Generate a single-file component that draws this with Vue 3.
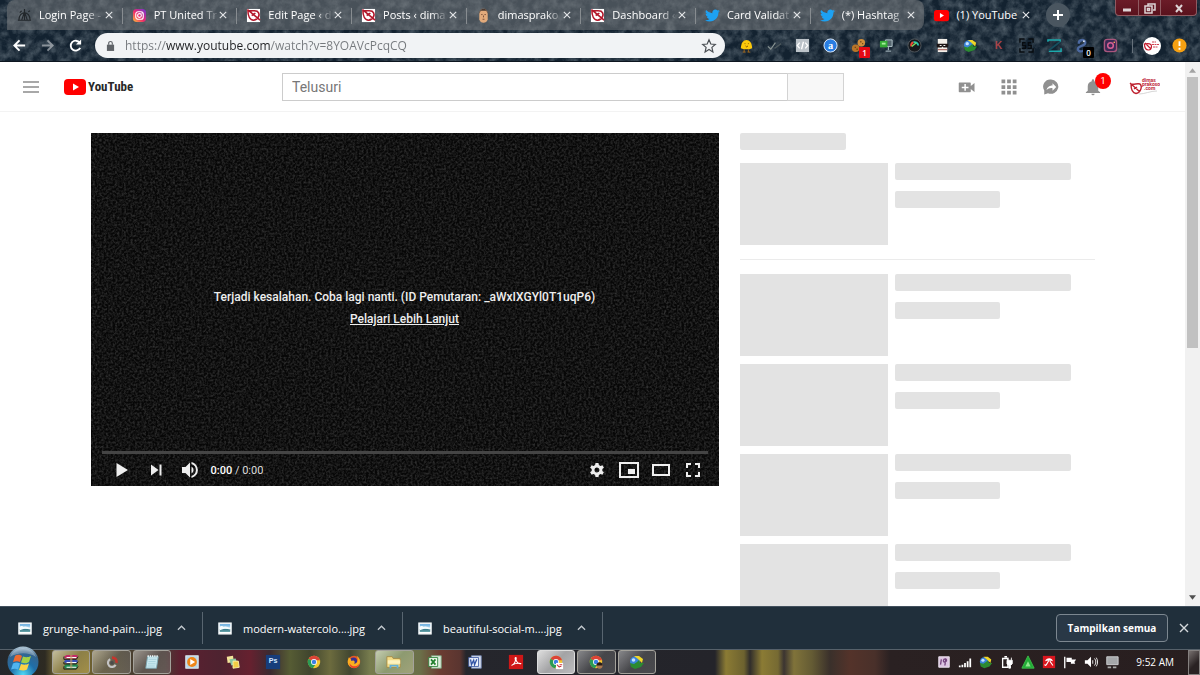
<template>
  <div class="desktop">
    <svg class="sprite" width="0" height="0" aria-hidden="true">
      <defs>
        <linearGradient id="insta" x1="0" y1="1" x2="1" y2="0">
          <stop offset="0" stop-color="#fdc13a" />
          <stop offset="0.45" stop-color="#ee2a6b" />
          <stop offset="1" stop-color="#6a35d8" />
        </linearGradient>
        <radialGradient id="orb" cx="0.5" cy="0.9" r="0.9">
          <stop offset="0" stop-color="#4fd8f5" />
          <stop offset="0.45" stop-color="#1f6ea8" />
          <stop offset="0.8" stop-color="#36648c" />
          <stop offset="1" stop-color="#b9cfdd" />
        </radialGradient>
        <linearGradient id="sky" x1="0" y1="0" x2="0" y2="1">
          <stop offset="0" stop-color="#5aa5dd" />
          <stop offset="0.55" stop-color="#d3ecf5" />
          <stop offset="0.6" stop-color="#2c7285" />
          <stop offset="1" stop-color="#6fa9ad" />
        </linearGradient>
        <filter id="grain" x="0" y="0" width="100%" height="100%">
          <feTurbulence type="fractalNoise" baseFrequency="0.45" numOctaves="2" seed="4" />
          <feColorMatrix values="0 0 0 0 1  0 0 0 0 1  0 0 0 0 1  1.6 0 0 0 -0.55" />
        </filter>
        <filter id="dust" x="0" y="0" width="100%" height="100%">
          <feTurbulence type="fractalNoise" baseFrequency="0.12" numOctaves="4" seed="9" />
          <feColorMatrix values="0 0 0 0 0.6  0 0 0 0 0.68  0 0 0 0 0.72  1.4 0 0 0 -0.45" />
        </filter>
      </defs>

      <!-- tab favicons -->
      <symbol id="login" viewBox="0 0 16 16">
        <path d="M1 13h14M2 13C2 8 5 5 8 5s6 3 6 8M5 13l3-9 3 9M8 4V1M3 5l2-2M12 4l2-1M8 6v7" fill="none" stroke="#22272b" stroke-width="1.2" />
      </symbol>
      <symbol id="instagram" viewBox="0 0 16 16">
        <rect x="1" y="1" width="14" height="14" rx="4" fill="url(#insta)" />
        <rect x="4" y="4" width="8" height="8" rx="2.5" fill="none" stroke="#fff" stroke-width="1.2" />
        <circle cx="8" cy="8" r="2" fill="none" stroke="#fff" stroke-width="1.2" />
        <circle cx="10.7" cy="5.4" r="0.7" fill="#fff" />
      </symbol>
      <symbol id="dimas" viewBox="0 0 16 16">
        <path d="M1 1h14v14H1z" fill="#fff" />
        <path d="M2 2.500c3 1.500 7-.5 10 1 4 3 1 9-4 9.500C4 13 2 8 2 2.500zM2 2l13 11M6 8l4-2.500" fill="none" stroke="#b3182b" stroke-width="1.700" />
      </symbol>
      <symbol id="face" viewBox="0 0 16 16">
        <path d="M3.500 6c0-7 9-7 9 0v6c-1 5-8 5-9 0z" fill="#e2aa7b" />
        <path d="M3.500 6c0-7 9-7 9 0l-1.500-3H5z" fill="#4a3a32" />
        <path d="M5.500 7h1.500M9 7h1.500M7 12h2M8 8v2" fill="none" stroke="#6b4430" stroke-width="0.900" />
      </symbol>
      <symbol id="twitter" viewBox="0 0 24 24">
        <path fill="#1da1f2" d="M23.9 4.6c-.9.4-1.8.7-2.8.8 1-.6 1.800-1.600 2.200-2.700-1 .6-2 1-3.100 1.200-.9-1-2.200-1.600-3.600-1.600-3.200 0-5.500 3-4.800 6A14 14 0 0 1 1.700 3.200a5 5 0 0 0 1.500 6.500c-.8 0-1.600-.2-2.200-.6-.1 2.300 1.600 4.400 3.900 4.900-.7.2-1.500.2-2.200.1.600 2 2.400 3.400 4.600 3.400A10 10 0 0 1 0 19.500a14 14 0 0 0 7.500 2.200c9.100 0 14.300-7.700 14-14.600 1-.7 1.800-1.600 2.400-2.500z" />
      </symbol>
      <symbol id="youtube" viewBox="0 0 24 18">
        <rect y="0" width="24" height="18" rx="4" fill="#f00" />
        <path d="M9.500 5v8l6.500-4z" fill="#fff" />
      </symbol>

      <!-- extensions -->
      <symbol id="chick" viewBox="0 0 16 16">
        <path d="M2 11c0-12 12-12 12 0l-3 1H5z" fill="#fdc90b" />
        <path d="M5.500 12v3M10 12v3M4 15h3M9 15h3" stroke="#a66a1c" stroke-width="1" />
        <path d="M6 6h.8M9.500 6h.8M7 8.500l1.200 1 1.300-1" stroke="#734800" fill="none" />
      </symbol>
      <symbol id="checks" viewBox="0 0 16 16">
        <path d="M1 9l3 3 5-7" fill="none" stroke="#8b9694" stroke-width="1.200" />
        <path d="M8 11l7-5" fill="none" stroke="#4b575c" stroke-width="1.500" />
      </symbol>
      <symbol id="code" viewBox="0 0 16 16">
        <path d="M1 1h14v14H1z" fill="#bcc3c9" />
        <path d="M5 5L2.500 8 5 11M11 5l2.500 3-2.500 3M9 4l-2 8" fill="none" stroke="#fff" stroke-width="1.400" />
      </symbol>
      <symbol id="circle-a" viewBox="0 0 16 16">
        <circle cx="8" cy="8" r="7" fill="#2a7de1" stroke="#e6f1ff" />
        <text x="8" y="11.500" text-anchor="middle" font-family="Liberation Serif" font-size="11" font-weight="700" fill="#fff">a</text>
      </symbol>
      <symbol id="cookies" viewBox="0 0 16 16">
        <circle cx="11" cy="5" r="4" fill="#cf8e3b" />
        <circle cx="5" cy="11" r="4" fill="#b97527" />
        <path d="M10 4h1M12 6h1M4 10h1M6 12h1" stroke="#573412" stroke-width="1.500" />
      </symbol>
      <symbol id="plug" viewBox="0 0 16 16">
        <path d="M7 2h7v7H7zM10 9v4M7 14h6" fill="#55666f" stroke="#b6c8ce" />
        <path d="M1 3h8v7H1z" fill="#36ad36" /><path d="M3 5h4v2H3z" fill="#a6ef9c" />
      </symbol>
      <symbol id="dial" viewBox="0 0 16 16">
        <circle cx="8" cy="8" r="7" fill="#17191d" stroke="#51585d" />
        <path d="M4.500 9A4 4 0 0 1 7 4.500" stroke="#ed4a37" stroke-width="2" fill="none" />
        <path d="M7 4.500A4 4 0 0 1 12 8" stroke="#27c5b5" stroke-width="2" fill="none" />
        <path d="M5 9l5-4" stroke="#7fdc5e" stroke-width="1.500" />
      </symbol>
      <symbol id="mask" viewBox="0 0 16 16">
        <path d="M3 1h10v14H3z" fill="#f2eee8" /><path d="M2 6h12v4H9L8 9l-1 1H2z" fill="#1d1515" />
        <path d="M5 8h2M9 8h2" stroke="#fff" /><path d="M3 12h10v1H3z" fill="#9d4a42" />
      </symbol>
      <symbol id="idm" viewBox="0 0 16 16">
        <circle cx="6" cy="7.500" r="5" fill="#3b84d8" />
        <path d="M5 2l5 0 4 3-1 4-4-4z" fill="#f1d627" />
        <path d="M1 9l4 1 3-2 2-2 1 3 4 0-3 4-6 2-4-2z" fill="#2b8a31" />
        <circle cx="4.500" cy="6" r="1.800" fill="#c4e4ff" />
      </symbol>
      <symbol id="letter-k" viewBox="0 0 16 16">
        <text x="8" y="12" text-anchor="middle" font-family="Liberation Sans" font-size="11" font-weight="700" fill="#a9454b">K</text>
      </symbol>
      <symbol id="frame-s" viewBox="0 0 16 16">
        <path d="M1 5V1h5M10 1h5v4M15 11v4h-5M6 15H1v-4M7 5H4v3h3v3H3M13 5h-3v3h3v3H9" fill="none" stroke="#070b0f" stroke-width="1.500" />
      </symbol>
      <symbol id="letter-z" viewBox="0 0 16 16">
        <path d="M1 4V2h13v2M2 14h13v-3" fill="none" stroke="#1ca9ac" stroke-width="1.600" />
        <path d="M14 4L2 13" stroke="#174e5e" stroke-width="2" />
      </symbol>
      <symbol id="snake" viewBox="0 0 16 16">
        <path d="M4 6c0-5 7-5 7-1s-8 3-8 7c1 4 7 2 8 0" fill="none" stroke="#4c69a0" stroke-width="2.500" />
        <circle cx="9.500" cy="3.500" r="1" fill="#d5e0ee" />
      </symbol>
      <symbol id="insta-line" viewBox="0 0 16 16">
        <rect x="1.500" y="1.500" width="13" height="13" rx="3" fill="#3c2a55" stroke="#a8567c" stroke-width="1.500" />
        <circle cx="8" cy="8" r="3" fill="none" stroke="#d95f94" stroke-width="1.600" />
        <circle cx="12" cy="4.500" r="0.900" fill="#f7a35a" />
      </symbol>
      <symbol id="profile" viewBox="0 0 18 18">
        <circle cx="9" cy="9" r="9" fill="#fff" />
        <path d="M1.500 7c0 4 2 6 4 6s3-2 3-4-3-3-7-2zM2 6l6 6" fill="none" stroke="#c3192c" stroke-width="1.200" />
        <path d="M9 5h4M9 7.500h7M10 10h5" stroke="#d04552" stroke-width="1.200" stroke-dasharray="2 0.500" />
      </symbol>
      <symbol id="warning" viewBox="0 0 16 16">
        <circle cx="8" cy="8" r="7.500" fill="#f6a012" />
        <path d="M7 3.500h2v5H7zM7 10.500h2v2H7z" fill="#fff" />
      </symbol>

      <!-- taskbar -->
      <symbol id="winrar" viewBox="0 0 18 18">
        <path d="M1 3l3-2h11l2 1-2 3H3z" fill="#c22a66" />
        <path d="M1 8.500l2-2h12l2 1-2 3H3z" fill="#3a50b7" />
        <path d="M1 14l2-2.500h12l2 1-2 4H3z" fill="#1f8a50" />
        <path d="M4 4h11M4 9.500h11M4 15h11" stroke="#fff" stroke-width="1.200" />
        <path d="M1 3v3h14l2-3M1 9v2.200h14l2-2.500M1 14v3h14l2-3" fill="none" stroke="#171717" />
        <path d="M8 1h2.500v15H8z" fill="#c49d66" opacity="0.600" />
      </symbol>
      <symbol id="ccleaner" viewBox="0 0 18 18">
        <path d="M7 6a4.500 4.500 0 1 0 6 6" fill="none" stroke="#c4c4c4" stroke-width="2.500" />
        <path d="M9 4c3 0 6 2 5 6" fill="none" stroke="#c5352d" stroke-width="3" />
        <circle cx="9" cy="10" r="2" fill="#4a4a4a" />
      </symbol>
      <symbol id="notepad" viewBox="0 0 18 18">
        <path d="M4 3h12l-2 13H2z" fill="#c9e8ef" stroke="#7da9b6" />
        <path d="M5 6h9M5 8.500h8M4.500 11h8.500M4 13.500h8" stroke="#9cc9d6" stroke-width="0.800" /><path d="M4 2.500h12" stroke="#eef6f8" stroke-width="2" stroke-dasharray="1.500 1" />
      </symbol>
      <symbol id="media" viewBox="0 0 18 18">
        <rect x="2" y="2" width="14" height="14" fill="#b9d6e8" stroke="#e9f4fa" />
        <circle cx="9" cy="9" r="5.500" fill="#ef8518" /><path d="M7 5.500v7l5.500-3.500z" fill="#fff" />
      </symbol>
      <symbol id="notes" viewBox="0 0 18 18">
        <path d="M2 3l7-1 1 7-7 1z" fill="#f4e59a" /><path d="M5 6l7-1 2 6-7 2z" fill="#8cc7a0" />
        <path d="M9 8l6 0 1 7-7 1z" fill="#f3ce45" stroke="#fff3aa" />
      </symbol>
      <symbol id="photoshop" viewBox="0 0 18 18">
        <rect x="1" y="1" width="16" height="16" fill="#173d7b" />
        <text x="9" y="10" text-anchor="middle" font-family="Liberation Sans" font-size="8" font-weight="700" fill="#d4e8ff">Ps</text>
      </symbol>
      <symbol id="chrome" viewBox="0 0 18 18">
        <circle cx="9" cy="9" r="7" fill="#f2c72f" />
        <path d="M9 9L3 5.400A7 7 0 0 1 15.800 7H9z" fill="#db4437" />
        <path d="M9 9l1.500 3-2.800 3.900A7 7 0 0 1 3 5.400z" fill="#2a9b55" />
        <circle cx="9" cy="9" r="3.300" fill="#fff" /><circle cx="9" cy="9" r="2.500" fill="#3c7fe4" />
      </symbol>
      <symbol id="chrome-card" viewBox="0 0 18 18">
        <use href="#chrome" /><path d="M9 10h8v7H9z" fill="#fff" /><path d="M10 12l3 3M13 12h3M13 14h2" stroke="#ca3140" stroke-width="1.200" />
      </symbol>
      <symbol id="chrome-face" viewBox="0 0 18 18">
        <use href="#chrome" /><circle cx="13" cy="13" r="3.500" fill="#ad7950" /><path d="M9.500 13c0-5 7-5 7 0z" fill="#271d19" />
      </symbol>
      <symbol id="firefox" viewBox="0 0 18 18">
        <circle cx="9" cy="9" r="7" fill="#e75925" /><circle cx="8.500" cy="8" r="4" fill="#38308e" />
        <path d="M3 4c2 1 3 2 3 4 3-2 5 1 3 3 5 0 5-6 3-9 4 3 5 8 2 11-4 5-13 2-12-5z" fill="#fbaf20" />
        <path d="M4 10c2 5 8 5 11 1-1 6-11 7-11-1z" fill="#ed402a" />
      </symbol>
      <symbol id="explorer" viewBox="0 0 18 18">
        <path d="M1 3h6l1 2h8v10H1z" fill="#f3dc87" stroke="#a58b45" /><path d="M2 7h14v4H2z" fill="#fdf3bf" />
        <path d="M4 16v-4h10v4h-2v-2H6v2z" fill="#63b0d8" />
      </symbol>
      <symbol id="excel" viewBox="0 0 18 18">
        <path d="M5 2h11v14H5z" fill="#dceedd" stroke="#7ca47e" /><path d="M2 4h10v10H2z" fill="#f2f9ef" stroke="#2d853b" />
        <path d="M4.500 6l5 6M9.500 6l-5 6" stroke="#23802f" stroke-width="2" />
      </symbol>
      <symbol id="word" viewBox="0 0 18 18">
        <path d="M5 2h11v14H5z" fill="#dce4f4" stroke="#7487b2" /><path d="M2 4h11v10H2z" fill="#edf2fc" stroke="#3f5ba2" />
        <path d="M4 6l1 6 2.500-5 1 5L11 6" fill="none" stroke="#3153a5" stroke-width="1.500" />
      </symbol>
      <symbol id="acrobat" viewBox="0 0 18 18">
        <path d="M1 1h16v16H1z" fill="#cf1717" />
        <path d="M4 13c4-2 5-6 4-8 0-2 2-1 1 1 0 3 3 5 5 5s-3-2-9 1" fill="none" stroke="#fff" stroke-width="1.200" />
      </symbol>

      <!-- notification area -->
      <symbol id="tray-app" viewBox="0 0 16 16">
        <path d="M2 2h12v12H2z" fill="#dbc4e1" stroke="#f4eaf6" /><path d="M5 5l-1 6M8 5c3-2 4 2 1 3-2 0-2-2-1-3zM10 5l-1 7" stroke="#75457f" fill="none" stroke-width="1.500" />
      </symbol>
      <symbol id="signal" viewBox="0 0 16 16"><path d="M2 14v-2M5 14v-3M8 14V9M11 14V7M14 14V4" stroke="#fff" stroke-width="2" /></symbol>
      <symbol id="battery" viewBox="0 0 16 16">
        <path d="M3 4h6v10H3zM5 2h3" fill="none" stroke="#fff" stroke-width="1.500" /><path d="M8 6h6v4l-2 2v3h-2v-3L8 10zM9 3v3M13 3v3" fill="#fff" stroke="#fff" />
      </symbol>
      <symbol id="green-triangle" viewBox="0 0 16 16"><path d="M8 1l7 14H1z" fill="#21ac36" stroke="#3fc44c" /><path d="M8 7l3 6H5z" fill="#8fe88c" /></symbol>
      <symbol id="avira" viewBox="0 0 16 16">
        <path d="M1 1h14v14H1z" fill="#d9161e" />
        <path d="M3.500 7c1-4 8-5 9 0-3-1-6-1-9 0z" fill="#fff" />
        <path d="M8 6l-3 5c-1 1.500-2 1-1.500-.5M9 7l3.500 5" fill="none" stroke="#fff" stroke-width="1.200" />
      </symbol>
      <symbol id="flag" viewBox="0 0 16 16"><path d="M2 2v13" stroke="#fff" stroke-width="1.500" /><path d="M4 3h6v2h5l-2 3 1 2H9V8H4z" fill="#fff" /></symbol>
      <symbol id="tray-volume" viewBox="0 0 16 16">
        <path d="M1 6h3l4-4v12l-4-4H1z" fill="#fff" /><path d="M10 6v4M12 4c2 2 2 6 0 8M14 3c2 3 2 7 0 10" fill="none" stroke="#fff" />
      </symbol>
      <symbol id="network" viewBox="0 0 16 16"><path d="M2 2h13v9H2z" fill="#a5a7aa" stroke="#d4d5d7" /><path d="M3 14h4M9 14h4" stroke="#aaa" stroke-width="2" /></symbol>
    </svg>

    <header class="browser">
      <svg class="texture" aria-hidden="true"><rect width="100%" height="100%" filter="url(#dust)" /></svg>
      <div class="strip">
        <nav class="tabs" aria-label="Tabs">
          <div v-for="tab in tabs" :key="tab.id" class="tab" :class="{ active: tab.id === activeTab }">
            <svg class="favicon"><use :href="'#' + tab.icon" /></svg>
            <button class="tab-title" @click="activeTab = tab.id">{{ tab.title }}</button>
            <button class="close" aria-label="Close tab">
              <svg viewBox="0 0 10 10"><path d="M1 1l8 8M9 1L1 9" /></svg>
            </button>
          </div>
        </nav>
        <button class="new-tab" aria-label="New tab"><svg viewBox="0 0 12 12"><path d="M6 1v10M1 6h10" /></svg></button>
        <div class="window-buttons">
          <button aria-label="Minimize"><svg viewBox="0 0 14 12"><path d="M3 8h8" stroke-width="3" /></svg></button>
          <button aria-label="Restore"><svg viewBox="0 0 14 12"><path d="M5 4V2h7v6h-2M2 4h7v7H2zM4.500 6.500h2v2h-2z" stroke-width="1.500" /></svg></button>
          <button class="wide" aria-label="Close"><svg viewBox="0 0 14 12"><path d="M4 3l6 7M10 3L4 10" stroke-width="2" /></svg></button>
        </div>
      </div>
      <div class="toolbar">
        <div class="nav-buttons">
          <button aria-label="Back"><svg viewBox="0 0 16 16"><path d="M14 8H3M8 2.500L2.500 8 8 13.500" /></svg></button>
          <button class="dim" aria-label="Forward"><svg viewBox="0 0 16 16"><path d="M2 8h11M8 2.500L13.500 8 8 13.500" /></svg></button>
          <button aria-label="Reload"><svg viewBox="0 0 16 16"><path d="M13 10.500A5.300 5.300 0 1 1 12.500 5" /><path d="M14 1.500V7H8.500z" fill="#fff" stroke="none" /></svg></button>
        </div>
        <form class="omnibox" @submit.prevent>
          <svg class="lock" viewBox="0 0 10 13"><path d="M1 5h8v7H1z" fill="#5f6368" /><path d="M3 5V3.500a2 2 0 0 1 4 0V5" fill="none" stroke="#5f6368" stroke-width="1.300" /></svg>
          <input v-model="url" type="text" aria-label="Address">
          <button type="button" aria-label="Bookmark"><svg viewBox="0 0 16 16"><path d="M8 1.800l1.800 4.200 4.500.4-3.400 3 1 4.500L8 11.500l-3.900 2.400 1-4.500-3.400-3 4.500-.4z" fill="none" stroke="#4b4f54" stroke-width="1.200" /></svg></button>
        </form>
        <div class="extensions">
          <button v-for="ext in extensions" :key="ext.icon" :aria-label="ext.icon">
            <svg><use :href="'#' + ext.icon" /></svg>
            <span v-if="ext.count" class="ext-count" :class="ext.tone">{{ ext.count }}</span>
          </button>
        </div>
        <div class="account">
          <button aria-label="Profile"><svg class="big"><use href="#profile" /></svg></button>
          <button aria-label="Update"><svg><use href="#warning" /></svg></button>
        </div>
      </div>
    </header>

    <div class="viewport">
      <div class="page">
        <div class="masthead">
          <div class="brand">
            <button class="menu" aria-label="Menu"><svg viewBox="0 0 16 12"><path d="M0 1h16M0 6h16M0 11h16" stroke="#8c8c8c" stroke-width="1.500" /></svg></button>
            <a href="#" class="logo">
              <svg viewBox="0 0 22 16"><rect width="22" height="16" rx="4" fill="#f00" /><path d="M9 4.500v7l6-3.500z" fill="#fff" /></svg>
              <span>YouTube</span>
            </a>
          </div>
          <form class="search" @submit.prevent>
            <input v-model="query" type="text" placeholder="Telusuri" aria-label="Telusuri">
            <button type="submit" aria-label="Cari"></button>
          </form>
          <div class="actions">
            <button aria-label="Buat video"><svg viewBox="0 0 24 24"><path fill-rule="evenodd" d="M17 10.500V7a1 1 0 0 0-1-1H2a1 1 0 0 0-1 1v11a1 1 0 0 0 1 1h14a1 1 0 0 0 1-1v-3.500l5 4V6.500zM14 13.500h-3.500V17h-2v-3.500H5v-2h3.500V8h2v3.500H14z" /></svg></button>
            <button aria-label="Aplikasi"><svg viewBox="0 0 24 24"><path d="M2 2h5v5H2zM9.500 2h5v5h-5zM17 2h5v5h-5zM2 9.500h5v5H2zM9.500 9.500h5v5h-5zM17 9.500h5v5h-5zM2 17h5v5H2zM9.500 17h5v5h-5zM17 17h5v5h-5z" /></svg></button>
            <button aria-label="Pesan"><svg viewBox="0 0 24 24"><path fill-rule="evenodd" d="M12 2a10 9.500 0 1 1-4 18.300L3 22v-5.500A9.500 9.500 0 0 1 12 2zM14 7v3c-5 0-7 3-8 6 2-2 5-3 8-2.500V17l5-5z" /></svg></button>
            <button aria-label="Notifikasi"><svg viewBox="0 0 24 24"><path d="M12 23a2.200 2.200 0 0 0 2.200-2H9.800a2.200 2.200 0 0 0 2.200 2zM19 17v-6c0-3.500-2-6-5.300-6.800V3.500a1.700 1.700 0 0 0-3.400 0v.7C7 5 5 7.500 5 11v6l-2.500 2v1h19v-1z" /></svg><span class="count">1</span></button>
            <button class="avatar" aria-label="Akun">
              <svg viewBox="0 0 32 20">
                <path d="M3 7c3 1 6-1 9 0 3 3 0 9-4 9.500C4 16 3 11 3 7zM2 6l10 9M6 12l3-2" fill="none" stroke="#be2230" stroke-width="1.400" />
                <g font-family="Roboto, sans-serif" font-size="5" font-weight="700" fill="#c0283a">
                  <text x="14" y="5">dimas</text><text x="14" y="9">prakoso</text><text x="16" y="13">.com</text>
                </g>
                <path d="M11 17c6 0 11-3 18-3" stroke="#ccc" stroke-width="0.800" fill="none" />
              </svg>
            </button>
          </div>
        </div>

        <main class="content">
          <section class="player">
            <svg class="texture" aria-hidden="true"><rect width="100%" height="100%" filter="url(#grain)" /></svg>
            <div class="error">
              <p>Terjadi kesalahan. Coba lagi nanti. (ID Pemutaran: _aWxIXGYl0T1uqP6)</p>
              <a href="#">Pelajari Lebih Lanjut</a>
            </div>
            <div class="progress"></div>
            <div class="controls">
              <div class="group">
                <button aria-label="Putar"><svg viewBox="0 0 18 18"><path d="M3.500 2v14L15 9z" /></svg></button>
                <button aria-label="Berikutnya"><svg viewBox="0 0 18 18"><path d="M4 3.500v11L11.500 9zM12.500 3.500h2v11h-2z" /></svg></button>
                <button aria-label="Suara"><svg viewBox="0 0 18 18"><path d="M1 6h3.500L9 1.500v15L4.500 12H1zM10.500 5.500v7a4 4 0 0 0 0-7zM10.500 1v2a6.300 6.300 0 0 1 0 12v2a8.200 8.200 0 0 0 0-16z" /></svg></button>
                <span class="time"><b>0:00</b> / 0:00</span>
              </div>
              <div class="group">
                <button aria-label="Setelan"><svg viewBox="0 0 18 18"><path fill-rule="evenodd" d="M7.500 2h3l.4 2 1.500.9 2-.7 1.500 2.600-1.600 1.300v1.800l1.600 1.300-1.500 2.600-2-.7-1.500.9-.4 2h-3l-.4-2-1.500-.9-2 .7-1.500-2.600 1.600-1.300V8.100L2.100 6.800l1.500-2.600 2 .7L7.100 4zM9 6.500a2.500 2.500 0 1 0 0 5 2.500 2.500 0 0 0 0-5z" /></svg></button>
                <button aria-label="Pemutar mini"><svg class="broad" viewBox="0 0 20 18"><path fill-rule="evenodd" d="M0 1h20v16H0zM2 3v12h16V3zM9 8h7v5H9z" /></svg></button>
                <button aria-label="Mode teater"><svg class="broad" viewBox="0 0 20 18"><path fill-rule="evenodd" d="M1 3h18v12H1zM3 5v8h14V5z" /></svg></button>
                <button aria-label="Layar penuh"><svg viewBox="0 0 18 18"><path d="M2 2h5v2H4v3H2zM11 2h5v5h-2V4h-3zM2 11h2v3h3v2H2zM14 11h2v5h-5v-2h3z" /></svg></button>
              </div>
            </div>
          </section>

          <aside class="related">
            <div class="heading"></div>
            <div v-for="n in 5" :key="n" class="placeholder" :class="{ first: n === 1 }">
              <div class="thumb"></div>
              <div class="lines">
                <div class="line"></div>
                <div class="line short"></div>
              </div>
            </div>
          </aside>
        </main>
      </div>
      <div class="scrollbar">
        <svg viewBox="0 0 8 5"><path d="M0 5l4-5 4 5z" fill="#a3a3a3" /></svg>
        <div class="thumb-bar"></div>
        <svg class="down" viewBox="0 0 8 5"><path d="M0 0l4 5 4-5z" fill="#505050" /></svg>
      </div>
    </div>

    <div class="downloads">
      <div v-for="file in downloads" :key="file" class="download">
        <svg class="picture" viewBox="0 0 16 14"><path d="M.5.500h15v13H.5z" fill="#fff" stroke="#c9d1d5" /><path d="M2 2h12v9H2z" fill="url(#sky)" /><path d="M2 5c2-2 4 0 5 0 3-1 4 1 7 1v2L8 7 2 9z" fill="#f4fbfd" /></svg>
        <span>{{ file }}</span>
        <button aria-label="Options"><svg viewBox="0 0 10 6"><path d="M1 5l4-4 4 4" /></svg></button>
      </div>
      <button class="show-all">Tampilkan semua</button>
      <button class="dismiss" aria-label="Close"><svg viewBox="0 0 10 10"><path d="M1 1l8 8M9 1L1 9" /></svg></button>
    </div>

    <footer class="taskbar">
      <button class="start" aria-label="Start">
        <svg viewBox="0 0 32 32">
          <circle cx="16" cy="16" r="15.500" fill="url(#orb)" />
          <path d="M8 10c3-2 5-1 7 0l-2 6c-2-1-4-1-7 0z" fill="#ef6b2f" />
          <path d="M16 10.500c3 1 5 1 8-.5l-2 6c-3 2-5 1-8 .5z" fill="#a4d145" />
          <path d="M6 17.500c3-1.500 5-1 7 0l-2 6c-2-1-4-1-7 0z" fill="#51b5ef" />
          <path d="M14 18c3 1 5 1 8-.5l-2 6c-3 1.500-5 1-8 .5z" fill="#fbd145" />
          <path d="M3 11C7-1 25-1 29 11 22 6 11 6 3 11z" fill="#fff" opacity="0.300" />
        </svg>
      </button>
      <div class="apps">
        <button v-for="app in apps" :key="app.id" class="app" :class="app.state" :aria-label="app.id">
          <svg><use :href="'#' + app.icon" /></svg>
        </button>
      </div>
      <div class="tray">
        <button v-for="icon in tray" :key="icon" :aria-label="icon"><svg><use :href="'#' + icon" /></svg></button>
      </div>
      <time class="clock">9:52 AM</time>
      <button class="show-desktop" aria-label="Show desktop"></button>
    </footer>
  </div>
</template>

<script setup>
import { ref } from 'vue';

const activeTab = ref(9);
const url = ref('https://www.youtube.com/watch?v=8YOAVcPcqCQ');
const query = ref('');

const tabs = ref([
  { id: 1, icon: 'login', title: 'Login Page -' },
  { id: 2, icon: 'instagram', title: 'PT United Tr' },
  { id: 3, icon: 'dimas', title: 'Edit Page ‹ d' },
  { id: 4, icon: 'dimas', title: 'Posts ‹ dima' },
  { id: 5, icon: 'face', title: 'dimasprako' },
  { id: 6, icon: 'dimas', title: 'Dashboard ‹' },
  { id: 7, icon: 'twitter', title: 'Card Validat' },
  { id: 8, icon: 'twitter', title: '(*) Hashtag' },
  { id: 9, icon: 'youtube', title: '(1) YouTube' },
]);

const extensions = [
  { icon: 'chick' },
  { icon: 'checks' },
  { icon: 'code' },
  { icon: 'circle-a' },
  { icon: 'cookies', count: '1', tone: 'red' },
  { icon: 'plug' },
  { icon: 'dial' },
  { icon: 'mask' },
  { icon: 'idm' },
  { icon: 'letter-k' },
  { icon: 'frame-s' },
  { icon: 'letter-z' },
  { icon: 'snake', count: '0', tone: 'black' },
  { icon: 'insta-line' },
];

const downloads = [
  'grunge-hand-pain....jpg',
  'modern-watercolo....jpg',
  'beautiful-social-m....jpg',
];

const apps = [
  { id: 'winrar', icon: 'winrar', state: 'open gold' },
  { id: 'ccleaner', icon: 'ccleaner', state: 'open' },
  { id: 'notepad', icon: 'notepad', state: 'open' },
  { id: 'media', icon: 'media' },
  { id: 'notes', icon: 'notes' },
  { id: 'photoshop', icon: 'photoshop' },
  { id: 'chrome', icon: 'chrome' },
  { id: 'firefox', icon: 'firefox' },
  { id: 'explorer', icon: 'explorer', state: 'open green' },
  { id: 'excel', icon: 'excel' },
  { id: 'word', icon: 'word' },
  { id: 'acrobat', icon: 'acrobat' },
  { id: 'chrome-1', icon: 'chrome-card', state: 'open current' },
  { id: 'chrome-2', icon: 'chrome-face', state: 'open' },
  { id: 'idm', icon: 'idm', state: 'open' },
];

const tray = ['tray-app', 'signal', 'idm', 'battery', 'green-triangle', 'avira', 'flag', 'tray-volume', 'network'];
</script>

<style>
body {
  background: #fff;
}
</style>

<style scoped>
.desktop {
  display: flex;
  flex-direction: column;
  height: 100vh;
  overflow: hidden;
  font-family: "Open Sans", "Noto Sans", sans-serif;
  font-size: 11px;
}

.sprite {
  position: absolute;
}

button {
  display: flex;
  align-items: center;
  justify-content: center;
  padding: 0;
  border: none;
  background: none;
  font: inherit;
  color: inherit;
  cursor: pointer;
}

.texture {
  position: absolute;
  inset: 0;
  width: 100%;
  height: 100%;
  pointer-events: none;
}

/* browser chrome */
.browser {
  position: relative;
  flex: none;
  background: #132230;
  border-bottom: 1px solid #0d1620;
  color: #fff;
}

.browser .texture {
  opacity: 0.4;
}

.strip {
  position: relative;
  display: flex;
  align-items: flex-start;
  height: 30px;
  padding-left: 7px;
}

.tabs {
  display: flex;
  flex: 0 1 1032px;
  min-width: 0;
  height: 30px;
}

.tab {
  display: flex;
  flex: 1 1 0;
  align-items: center;
  box-sizing: border-box;
  min-width: 0;
  padding: 0 9px 0 10px;
  background: rgba(125, 128, 130, 0.5);
}

.tab:first-child {
  border-radius: 8px 0 0 0;
}

.tab:nth-last-child(2) {
  border-radius: 0 8px 8px 0;
}

.tab + .tab:not(.active) {
  background: linear-gradient(#878c90, #878c90) 0 8px / 1px 16px no-repeat, rgba(125, 128, 130, 0.5);
}

.tab.active {
  background: none;
}

.favicon {
  flex: none;
  width: 15px;
  height: 15px;
}

.tab-title {
  flex: 1;
  justify-content: flex-start;
  min-width: 0;
  margin-left: 7px;
  white-space: nowrap;
  line-height: 18px;
  mask-image: linear-gradient(90deg, #000 48px, transparent 66px);
}

.active .tab-title {
  mask-image: none;
}

.close svg {
  width: 8px;
  height: 8px;
  fill: none;
  stroke: #e4e6e8;
  stroke-width: 1.4;
}

.new-tab {
  width: 24px;
  height: 24px;
  margin: 3px 0 0 7px;
  border-radius: 50%;
  background: #4a5660;
}

.new-tab svg {
  width: 12px;
  height: 12px;
  stroke: #fff;
  stroke-width: 2;
}

.window-buttons {
  display: flex;
  margin-left: auto;
  margin-right: 3px;
  border: 1px solid #8f5a61;
  border-top: none;
  border-radius: 0 0 4px 4px;
  background: linear-gradient(#6b1c28, #5a121d);
}

.window-buttons button {
  width: 22px;
  height: 15px;
}

.window-buttons button + button {
  border-left: 1px solid #8f5a61;
}

.window-buttons .wide {
  width: 36px;
}

.window-buttons svg {
  width: 14px;
  height: 12px;
  fill: none;
  stroke: #ddd3d5;
}

.toolbar {
  position: relative;
  display: flex;
  align-items: center;
  height: 31px;
  padding: 0 5px;
}

.nav-buttons {
  display: flex;
}

.nav-buttons button {
  width: 28px;
  height: 24px;
}

.nav-buttons svg {
  width: 15px;
  height: 15px;
  fill: none;
  stroke: #fff;
  stroke-width: 2;
}

.nav-buttons .dim {
  opacity: 0.45;
}

.omnibox {
  display: flex;
  flex: 1;
  align-items: center;
  height: 25px;
  margin-left: 6px;
  padding: 0 8px 0 11px;
  border-radius: 13px;
  background: #f1f3f5;
}

.lock {
  width: 9px;
  height: 12px;
}

.omnibox input {
  flex: 1;
  min-width: 0;
  margin-left: 10px;
  padding: 0;
  border: none;
  outline: none;
  font-family: "Open Sans", "Noto Sans", sans-serif;
  font-size: 12px;
  line-height: 18px;
  color: transparent;
  background: linear-gradient(90deg, #75797d 41px, #202124 41px, #202124 145px, #75797d 145px);
  background-clip: text;
}

.omnibox button svg {
  width: 16px;
  height: 16px;
}

.extensions {
  display: flex;
  margin-left: 7px;
}

.extensions button {
  position: relative;
  width: 28px;
  height: 24px;
}

.extensions svg,
.account svg {
  width: 15px;
  height: 15px;
}

.ext-count {
  position: absolute;
  right: 2px;
  bottom: 0;
  width: 11px;
  border-radius: 1px;
  font-size: 8px;
  font-weight: 600;
  line-height: 11px;
}

.ext-count.red {
  background: #e50914;
}

.ext-count.black {
  background: #000;
}

.account {
  display: flex;
  gap: 11px;
  margin-left: 8px;
  padding-left: 11px;
  background: linear-gradient(#65707a, #65707a) 0 2px / 1px 14px no-repeat;
}

.account .big {
  width: 18px;
  height: 18px;
}

.account button:last-child {
  margin-right: 8px;
}

/* page */
.viewport {
  display: flex;
  flex: 1;
  min-height: 0;
  background: #fff;
}

.page {
  flex: 1;
  min-width: 0;
  overflow: hidden;
  font-family: Roboto, sans-serif;
}

.masthead {
  display: grid;
  grid-template-columns: 282px minmax(0, 562px) minmax(240px, 1fr);
  align-items: center;
  height: 49px;
  border-bottom: 1px solid #f3f3f3;
}

.brand {
  display: flex;
  align-items: center;
  padding-left: 23px;
}

.menu svg {
  width: 16px;
  height: 12px;
}

.logo {
  display: flex;
  align-items: center;
  gap: 2px;
  margin-left: 25px;
  color: #282828;
  text-decoration: none;
  font-family: "Liberation Sans Narrow", "Roboto Condensed", Roboto, sans-serif;
  font-size: 13px;
  font-weight: 700;
}

.logo svg {
  width: 22px;
  height: 16px;
}

.search {
  display: flex;
}

.search input {
  flex: 1;
  min-width: 0;
  height: 28px;
  box-sizing: border-box;
  padding: 0 9px;
  border: 1px solid #ccc;
  outline: none;
  font-family: Roboto, sans-serif;
  font-size: 14px;
}

.search input::placeholder {
  color: #777;
}

.search button {
  width: 57px;
  height: 28px;
  margin-left: -1px;
  border: 1px solid #d3d3d3;
  background: #f8f8f8;
}

.actions {
  display: flex;
  justify-content: flex-end;
  gap: 24px;
  padding-right: 25px;
}

.actions button {
  position: relative;
}

.actions svg {
  width: 18px;
  height: 18px;
  fill: #909090;
}

.actions .avatar {
  margin-left: 2px;
}

.actions .avatar svg {
  width: 32px;
  height: 20px;
}

.count {
  position: absolute;
  left: 11px;
  bottom: 8px;
  width: 16px;
  border-radius: 50%;
  background: #f00;
  color: #fff;
  font-size: 9px;
  line-height: 16px;
}

.content {
  display: flex;
  align-items: flex-start;
  gap: 21px;
  max-width: 1004px;
  margin: 0 auto;
  padding: 21px 20px 0;
}

.player {
  position: relative;
  display: flex;
  flex: 1;
  flex-direction: column;
  aspect-ratio: 16 / 9;
  background: #070707;
  color: #eee;
}

.player .texture {
  opacity: 0.2;
}

.error {
  position: relative;
  flex: 1;
  padding: 153px 0 0;
  text-align: center;
  font-size: 12px;
  font-weight: 500;
  line-height: 22px;
}

.error p {
  margin: 0;
}

.error a {
  color: #eee;
}

.progress {
  position: relative;
  height: 3px;
  margin: 0 11px;
  background: #454545;
}

.controls {
  position: relative;
  display: flex;
  justify-content: space-between;
  height: 32px;
  padding: 0 10px 0 15px;
}

.group {
  display: flex;
  align-items: center;
}

.controls button {
  width: 32px;
  height: 32px;
}

.controls .group:first-child button + button {
  margin-left: 2px;
}

.controls svg {
  width: 18px;
  height: 18px;
  fill: #eee;
}

.controls .broad {
  width: 20px;
}

.time {
  margin-left: 5px;
  font-size: 11px;
  color: #ddd;
}

.time b {
  font-weight: 500;
  color: #fff;
}

.related {
  flex: 0 1 355px;
}

.heading {
  width: 106px;
  height: 17px;
  margin-bottom: 13px;
  border-radius: 2px;
  background: #e3e3e3;
}

.placeholder {
  display: flex;
  gap: 7px;
  margin-bottom: 8px;
}

.placeholder.first {
  margin-bottom: 14px;
  padding-bottom: 14px;
  border-bottom: 1px solid #ebebeb;
}

.thumb {
  flex: none;
  width: 148px;
  height: 82px;
  background: #e3e3e3;
}

.lines {
  display: flex;
  flex-direction: column;
  gap: 11px;
}

.line {
  width: 176px;
  height: 17px;
  border-radius: 2px;
  background: #e3e3e3;
}

.line.short {
  width: 105px;
}

.scrollbar {
  display: flex;
  flex: none;
  flex-direction: column;
  align-items: center;
  width: 15px;
  padding: 6px 0;
  box-sizing: border-box;
  background: #f1f1f1;
}

.scrollbar svg {
  width: 7px;
  height: 5px;
}

.thumb-bar {
  width: 11px;
  height: 51%;
  margin-top: 4px;
  background: #c1c1c1;
}

.scrollbar .down {
  margin-top: auto;
}

/* download shelf */
.downloads {
  display: flex;
  flex: none;
  align-items: center;
  height: 42px;
  border-top: 1px solid #42505d;
  background: #202f3b;
  color: #fff;
}

.download {
  display: flex;
  align-items: center;
  box-sizing: border-box;
  width: 200px;
  height: 32px;
  padding: 0 16px 0 15px;
  border-right: 1px solid #586570;
}

.download:first-child {
  width: 203px;
  padding-left: 18px;
}

.download span {
  flex: 1;
  margin-left: 11px;
  white-space: nowrap;
}

.picture {
  width: 14px;
  height: 13px;
}

.download button svg {
  width: 9px;
  height: 6px;
  fill: none;
  stroke: #c5cbd0;
  stroke-width: 1.4;
}

.show-all {
  width: 112px;
  height: 28px;
  margin-left: auto;
  border: 1px solid #7c8790;
  border-radius: 4px;
  background: #293846;
  font-size: 10px;
  font-weight: 700;
}

.dismiss {
  margin: 0 11px;
}

.dismiss svg {
  width: 10px;
  height: 10px;
  stroke: #d5d9dc;
  stroke-width: 1.4;
}

/* taskbar */
.taskbar {
  display: flex;
  flex: none;
  align-items: flex-start;
  height: 25px;
  border-top: 1px solid #56616a;
  background: linear-gradient(90deg,
    #24272b 0, #2d2a22 45px, #8b7a3a 60px, #6d6030 90px, #4a4031 130px, #4b3a34 165px,
    #5d2030 180px, #4e2330 220px, #66212f 250px, #3b2a30 270px, #565c34 290px, #40452e 310px,
    #6c6b3e 330px, #424731 350px, #777c4e 370px, #6b7049 420px, #6b3c32 440px, #5a3530 460px,
    #25262c 466px, #24242a 715px, #8b7b34 726px, #6d622f 744px, #302d2b 750px, #8b7b34 762px,
    #766a33 778px, #3b3431 784px, #80733a 794px, #645b34 812px, #3a302b 830px, #54332a 850px,
    #49302a 875px, #2a2122 890px, #281e1f 100%);
  color: #fff;
}

.start {
  position: relative;
  width: 32px;
  height: 23px;
  margin-left: 7px;
}

.start svg {
  flex: none;
  width: 32px;
  height: 32px;
}

.apps {
  display: flex;
  flex: 0 1 604px;
  height: 24px;
  margin-left: 13px;
  gap: 2px;
}

.app {
  flex: 1;
  border: 1px solid transparent;
  border-radius: 3px;
}

.app svg {
  width: 16px;
  height: 16px;
}

.app.open {
  border-color: #a4a29b;
  background: linear-gradient(135deg, rgba(255, 255, 255, 0.45), rgba(120, 120, 120, 0.4) 50%, rgba(160, 160, 160, 0.3));
}

.app.gold {
  background: linear-gradient(135deg, #c3bd9e, #8c7f47 50%, #a28f48);
}

.app.green {
  background: linear-gradient(135deg, #c4cdb0, #8d9a70 50%, #a1a37a);
}

.app.current {
  border-color: #ddd;
  background: linear-gradient(135deg, #dedede, #a3a3a5 50%, #bcbcbe);
}

.tray {
  display: flex;
  margin-left: auto;
}

.tray button {
  width: 21px;
  height: 24px;
}

.tray svg {
  width: 14px;
  height: 14px;
}

.clock {
  margin-left: 14px;
  font-size: 10px;
  line-height: 24px;
  white-space: nowrap;
}

.show-desktop {
  width: 12px;
  height: 25px;
  margin-left: 14px;
  border: 1px solid #85807f;
  background: linear-gradient(135deg, #77706f, #2a2223 60%);
}
</style>
